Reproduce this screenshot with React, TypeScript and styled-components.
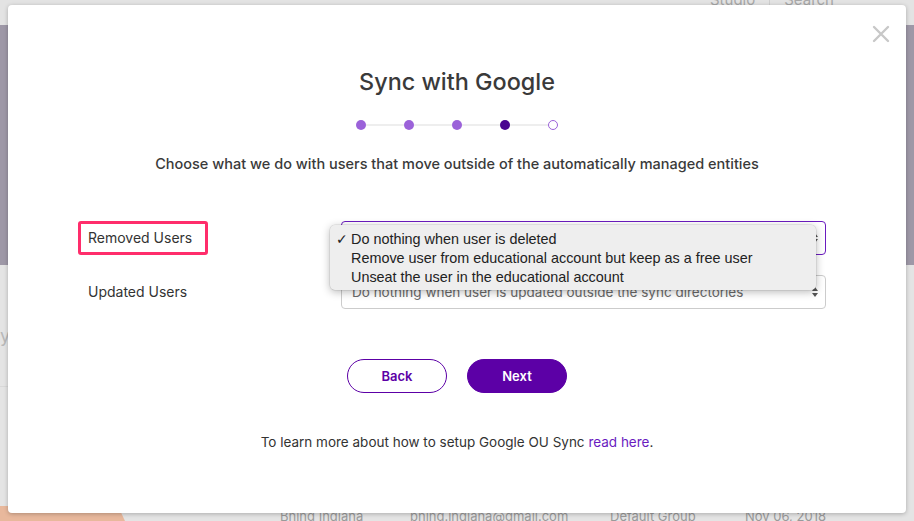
import React from 'react';
import styled, { createGlobalStyle } from 'styled-components';

const GlobalStyle = createGlobalStyle`
  html, body {
    margin: 0;
    padding: 0;
    overflow: hidden;
  }
  body {
    font-family: Inter, "Open Sans", sans-serif;
    color: #333333;
  }
`;

const Page = styled.div`
  position: relative;
  width: 914px;
  height: 521px;
  overflow: hidden;
  display: flex;
  flex-direction: column;
  background: #e4e4e4;
`;

const TopBar = styled.div`
  height: 33px;
  margin-top: -8px;
  background: #e3e3e3;
  display: flex;
  justify-content: flex-end;
  align-items: flex-start;
  gap: 14px;
  padding-right: 80px;
  font-size: 15px;
  color: #a8a8a8;
  line-height: 1;
`;

const TopLink = styled.span<{ $divided?: boolean }>`
  padding-left: ${(p) => (p.$divided ? '14px' : '0')};
  border-left: ${(p) => (p.$divided ? '1px solid #cfcfcf' : 'none')};
`;

const Banner = styled.div`
  height: 240px;
  background: #9e98a7;
`;

const Content = styled.div`
  flex: 1;
  display: flex;
  flex-direction: column;
  justify-content: space-between;
  background: #e4e4e4;
`;

const SideText = styled.div`
  margin-top: 60px;
  font-size: 18px;
  color: #b8b8b8;
  border-bottom: 1px solid #d8d8d8;
  width: 8px;
  overflow: hidden;
  padding-bottom: 40px;
`;

const TableRow = styled.div`
  display: flex;
  align-items: flex-start;
  height: 15px;
  font-size: 13px;
  color: #9a9a9a;
`;

const OrangeTab = styled.div`
  width: 125px;
  height: 15px;
  background: #e8b89c;
  clip-path: polygon(0 0, 118px 0, 125px 100%, 0 100%);
`;

const Cell = styled.span<{ $w: number }>`
  width: ${(p) => p.$w}px;
  white-space: nowrap;
  overflow: hidden;
  margin-top: 2px;
`;

const Modal = styled.div`
  position: absolute;
  left: 8px;
  top: 5px;
  width: 898px;
  height: 508px;
  background: #ffffff;
  border-radius: 4px;
  box-shadow: 0 1px 4px rgba(0, 0, 0, 0.25);
  display: flex;
  flex-direction: column;
  align-items: center;
  padding-top: 62px;
  box-sizing: border-box;
`;

const CloseButton = styled.button`
  position: absolute;
  top: 20px;
  right: 16px;
  width: 18px;
  height: 18px;
  padding: 0;
  border: none;
  background: none;
  cursor: pointer;
`;

const Title = styled.h2`
  margin: 0;
  font-size: 23.4px;
  line-height: 30px;
  font-weight: 500;
  color: #3a3a3a;
`;

const Stepper = styled.div`
  margin-top: 23px;
  display: flex;
  align-items: center;
`;

const StepLine = styled.div`
  width: 38px;
  height: 2px;
  background: #eeeeee;
`;

const Dot = styled.div<{ $state: 'done' | 'current' | 'todo' }>`
  width: 10px;
  height: 10px;
  border-radius: 50%;
  box-sizing: border-box;
  background: ${(p) =>
    p.$state === 'done' ? '#9b62d9' : p.$state === 'current' ? '#4a0590' : '#ffffff'};
  border: ${(p) => (p.$state === 'todo' ? '1.5px solid #9b62d9' : 'none')};
`;

const Subtitle = styled.p`
  margin: 24px 0 0;
  font-size: 14.5px;
  line-height: 20px;
  font-weight: 500;
  color: #3a3a3a;
`;

const Form = styled.div`
  margin-top: 47px;
  width: 100%;
  padding: 0 80px;
  box-sizing: border-box;
  display: grid;
  grid-template-columns: 253px 1fr;
  row-gap: 20px;
  align-items: center;
`;

const Label = styled.div<{ $highlight?: boolean }>`
  font-size: 14px;
  color: #333333;
  line-height: 20px;
  justify-self: start;
  ${(p) =>
    p.$highlight &&
    `
    margin-left: -10px;
    padding: 4px 13px 4px 7px;
    border: 3px solid #ff2d6b;
    border-radius: 3px;
  `}
`;

const SelectWrap = styled.div`
  position: relative;
`;

const SelectBox = styled.div<{ $focused?: boolean }>`
  height: 34px;
  box-sizing: border-box;
  border: 1px solid ${(p) => (p.$focused ? '#6a1bbf' : '#cccccc')};
  border-radius: 4px;
  display: flex;
  align-items: center;
  padding: 0 6px 0 10px;
  font-size: 13.5px;
  color: #6a6a6a;
  background: #ffffff;
`;

const SelectText = styled.span`
  flex: 1;
  white-space: nowrap;
  overflow: hidden;
`;

const Menu = styled.ul`
  position: absolute;
  left: -11px;
  top: 4px;
  width: 486px;
  margin: 0;
  padding: 4px 0 4px;
  list-style: none;
  background: #eeeeee;
  border-radius: 5px;
  box-shadow: 0 2px 8px rgba(0, 0, 0, 0.28), 0 0 0 0.5px rgba(0, 0, 0, 0.12);
  font-family: "Liberation Sans", Arial, sans-serif;
  font-size: 14.4px;
  color: #222222;
  z-index: 2;
`;

const MenuItem = styled.li`
  display: flex;
  align-items: center;
  height: 19px;
  padding-left: 6px;
`;

const Check = styled.span`
  width: 15px;
  font-size: 14px;
  font-weight: 700;
  font-family: "DejaVu Sans", sans-serif;
`;

const Buttons = styled.div`
  margin-top: 50px;
  display: flex;
  gap: 20px;
`;

const Button = styled.button<{ $primary?: boolean }>`
  width: 100px;
  height: 34px;
  border-radius: 17px;
  border: 1px solid #5c00a6;
  background: ${(p) => (p.$primary ? '#5c00a6' : '#ffffff')};
  color: ${(p) => (p.$primary ? '#ffffff' : '#5c00a6')};
  font-family: Inter, "Open Sans", sans-serif;
  font-weight: 600;
  font-size: 13px;
  cursor: pointer;
`;

const Footer = styled.p`
  margin: 39px 0 0;
  font-size: 13.5px;
  line-height: 20px;
  color: #333333;
`;

const FooterLink = styled.a`
  color: #6a1bbf;
  text-decoration: none;
`;

const Arrows = () => (
  <svg width="8" height="12" viewBox="0 0 8 12">
    <path d="M4 1 L7 5 H1 Z" fill="#555" />
    <path d="M4 11 L7 7 H1 Z" fill="#555" />
  </svg>
);

const steps: Array<'done' | 'current' | 'todo'> = ['done', 'done', 'done', 'current', 'todo'];

export default function App() {
  return (
    <>
      <GlobalStyle />
      <Page>
        <TopBar>
          <TopLink>Studio</TopLink>
          <TopLink $divided>Search</TopLink>
        </TopBar>
        <Banner />
        <Content>
          <SideText>y</SideText>
          <TableRow>
            <OrangeTab />
            <Cell $w={155} />
            <Cell $w={130}>Bhing Indiana</Cell>
            <Cell $w={200}>bhing.indiana@gmail.com</Cell>
            <Cell $w={135}>Default Group</Cell>
            <Cell $w={120}>Nov 06, 2018</Cell>
          </TableRow>
        </Content>

        <Modal>
          <CloseButton aria-label="Close">
            <svg width="18" height="18" viewBox="0 0 18 18">
              <path d="M2 2 L16 16 M16 2 L2 16" stroke="#c8c8c8" strokeWidth="2.4" strokeLinecap="round" />
            </svg>
          </CloseButton>
          <Title>Sync with Google</Title>
          <Stepper>
            {steps.map((s, i) => (
              <React.Fragment key={i}>
                {i > 0 && <StepLine />}
                <Dot $state={s} />
              </React.Fragment>
            ))}
          </Stepper>
          <Subtitle>Choose what we do with users that move outside of the automatically managed entities</Subtitle>
          <Form>
            <Label $highlight>Removed Users</Label>
            <SelectWrap>
              <SelectBox $focused>
                <SelectText>Do nothing when user is deleted</SelectText>
                <Arrows />
              </SelectBox>
              <Menu>
                <MenuItem>
                  <Check>✓</Check>Do nothing when user is deleted
                </MenuItem>
                <MenuItem>
                  <Check />Remove user from educational account but keep as a free user
                </MenuItem>
                <MenuItem>
                  <Check />Unseat the user in the educational account
                </MenuItem>
              </Menu>
            </SelectWrap>
            <Label>Updated Users</Label>
            <SelectWrap>
              <SelectBox>
                <SelectText>Do nothing when user is updated outside the sync directories</SelectText>
                <Arrows />
              </SelectBox>
            </SelectWrap>
          </Form>
          <Buttons>
            <Button>Back</Button>
            <Button $primary>Next</Button>
          </Buttons>
          <Footer>
            To learn more about how to setup Google OU Sync <FooterLink href="#">read here</FooterLink>.
          </Footer>
        </Modal>
      </Page>
    </>
  );
}
